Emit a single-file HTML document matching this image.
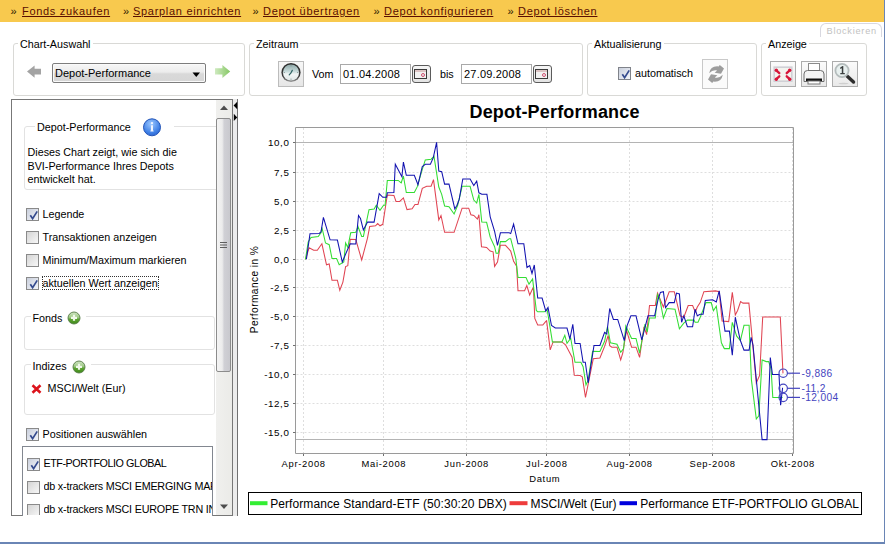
<!DOCTYPE html>
<html><head><meta charset="utf-8">
<style>
*,*::before,*::after{box-sizing:border-box}
html,body{margin:0;padding:0;width:885px;height:548px;overflow:hidden;background:#fff;font-family:"Liberation Sans",sans-serif;}
.a{position:absolute}
#top{left:0;top:0;width:884px;height:22px;background:#f8c94e}
.lk{position:absolute;top:5px;font-size:11px;letter-spacing:0.7px;color:#5a0e00;text-decoration:underline;white-space:pre;line-height:13px}
.rq{position:absolute;top:4.5px;font-size:11px;font-weight:normal;color:#2e2000;line-height:13px}
.gb{position:absolute;border:1px solid #d9d9d6;border-radius:3px}
.gt{position:absolute;background:#fff;font-size:10.75px;color:#000;white-space:pre;line-height:12px;padding:0 2px}
.t{position:absolute;font-size:10.75px;color:#000;white-space:pre;line-height:12px}
.cb{position:absolute;width:13px;height:13px;border:1px solid #80838a;background:linear-gradient(135deg,#c9cfdc,#f3f5fa)}
.cbg{border-color:#8a8a8a}
.ck{position:absolute;left:1px;top:1px}
.btn{position:absolute;border:1px solid #b5b5b5;background:linear-gradient(#f6f6f6,#e2e2e2)}
.cal{width:19px;height:18px;border:1px solid #5b5b5b;border-radius:3px;background:linear-gradient(#f6f6f6,#e3e3e3)}
.cal::before{content:"";position:absolute;left:1px;top:3px;width:13px;height:10px;border:1.5px solid #3a3a3a;background:linear-gradient(#dcc4c4 0,#dcc4c4 2px,#f2f2f2 2px)}
.cal::after{content:"";position:absolute;left:7.7px;top:6.8px;width:4px;height:4px;border:1px solid #d05070;border-radius:50%}
.ib{width:26px;height:26px;border:1px solid #acacac;background:linear-gradient(#fbfbfb,#e9e9e9)}
</style></head><body>
<div id="top" class="a"></div>
<div class="rq" style="left:10.5px">&raquo;</div><div class="lk" style="left:22px">Fonds zukaufen</div>
<div class="rq" style="left:123px">&raquo;</div><div class="lk" style="left:133px">Sparplan einrichten</div>
<div class="rq" style="left:252.5px">&raquo;</div><div class="lk" style="left:263px">Depot übertragen</div>
<div class="rq" style="left:373.5px">&raquo;</div><div class="lk" style="left:384px">Depot konfigurieren</div>
<div class="rq" style="left:507.5px">&raquo;</div><div class="lk" style="left:518px">Depot löschen</div>
<div class="a" style="left:884px;top:0;width:1px;height:544px;background:#6a85b5"></div>
<div class="a" style="left:0;top:542px;width:885px;height:2px;background:#6a85b5"></div>

<!-- Blockieren tab -->
<div class="a" style="left:820px;top:23px;width:62px;height:14px;border:1px solid #d8d8e0;border-bottom:none;border-radius:6px 6px 0 0"></div>
<div class="t" style="left:826.5px;top:25px;color:#c2c2c2;font-size:9.2px;letter-spacing:0.75px">Blockieren</div>

<!-- group boxes -->
<div class="gb" style="left:13px;top:43px;width:232px;height:53px"></div>
<div class="gt" style="left:18px;top:38px">Chart-Auswahl</div>
<div class="gb" style="left:249px;top:43px;width:334px;height:53px"></div>
<div class="gt" style="left:254px;top:38px">Zeitraum</div>
<div class="gb" style="left:587px;top:43px;width:170px;height:53px"></div>
<div class="gt" style="left:592px;top:38px">Aktualisierung</div>
<div class="gb" style="left:761px;top:43px;width:106px;height:53px"></div>
<div class="gt" style="left:766px;top:38px">Anzeige</div>


<!-- Chart-Auswahl widgets -->
<svg class="a" style="left:26px;top:65px" width="16" height="14" viewBox="0 0 16 14"><path d="M1 6.6 L8.6 0.5 L8.6 3.8 L15 3.8 L15 9.6 L8.6 9.6 L8.6 12.7 Z" fill="#a3a3a3"/></svg>
<div class="a" style="left:52px;top:63px;width:154px;height:20px;border:1px solid #7d7d7d;border-radius:2px;background:linear-gradient(#f7f7f7 0%,#ececec 45%,#d9d9d9 55%,#d6d6d6 100%);box-shadow:inset 0 0 0 1px #fafafa"></div>
<div class="t" style="left:55px;top:67px;font-size:11px">Depot-Performance</div>
<svg class="a" style="left:192px;top:72px" width="9" height="6"><path d="M0.5 0.5 L8 0.5 L4.25 5 Z" fill="#000"/></svg>
<svg class="a" style="left:214px;top:64px" width="18" height="16" viewBox="0 0 18 16"><defs><linearGradient id="ga" x1="0" x2="1"><stop offset="0" stop-color="#cfeac0"/><stop offset="1" stop-color="#86c865"/></linearGradient></defs><path d="M1 4.2 L8.4 4.2 L8.4 1 L16.2 7.6 L8.4 14 L8.4 10.6 L1 10.6 Z" fill="url(#ga)"/></svg>

<!-- Zeitraum widgets -->
<div class="a" style="left:278px;top:61px;width:26px;height:26px;border:1px solid #bcbcbc;background:linear-gradient(#f7f7f7,#e6e6e6)"></div>
<svg class="a" style="left:279px;top:61px" width="24" height="24" viewBox="0 0 24 24"><defs><linearGradient id="cf" x1="0" y1="0" x2="0" y2="1"><stop offset="0" stop-color="#8fa9a9"/><stop offset="0.45" stop-color="#c9dcdc"/><stop offset="0.6" stop-color="#f2f6f6"/><stop offset="1" stop-color="#dfe6e6"/></linearGradient><linearGradient id="cr" x1="0" y1="0" x2="0" y2="1"><stop offset="0" stop-color="#2a2a2a"/><stop offset="0.7" stop-color="#3a3a3a"/><stop offset="1" stop-color="#9a9a9a"/></linearGradient></defs><circle cx="12" cy="11.5" r="9.6" fill="url(#cr)"/><circle cx="12" cy="11.5" r="8.1" fill="url(#cf)"/><g stroke="#7a8c8c" stroke-width="0.8"><path d="M12 4.2 V5.4 M12 17.6 V18.8 M4.7 11.5 H5.9 M18.1 11.5 H19.3"/></g><path d="M12 11.8 L13.3 9.4 M12 11.8 L10.2 13.8" stroke="#2f6464" stroke-width="1.2" stroke-linecap="round"/></svg>
<div class="t" style="left:312px;top:68px;font-size:10.75px">Vom</div>
<div class="a" style="left:340px;top:64px;width:71px;height:20px;border:1px solid #a9a9a9;background:#fff"></div>
<div class="t" style="left:343px;top:68px;font-size:11px;letter-spacing:0.2px">01.04.2008</div>
<div class="a cal" style="left:412px;top:65px"></div>
<div class="t" style="left:440px;top:68px;font-size:10.75px">bis</div>
<div class="a" style="left:461px;top:64px;width:71px;height:20px;border:1px solid #a9a9a9;background:#fff"></div>
<div class="t" style="left:464px;top:68px;font-size:11px;letter-spacing:0.2px">27.09.2008</div>
<div class="a cal" style="left:533px;top:65px"></div>

<!-- Aktualisierung -->
<div class="cb" style="left:618px;top:67px"><svg class="ck" width="11" height="11" viewBox="0 0 11 11"><path d="M2.3 5.3 L4.6 8.6 L9.2 1.4" stroke="#354b8e" stroke-width="1.7" fill="none"/></svg></div>
<div class="t" style="left:635px;top:67px;font-size:10.75px">automatisch</div>
<div class="a" style="left:702px;top:59px;width:26px;height:30px;border:1px solid #c9c9c9;background:#fbfbfb"></div>
<svg class="a" style="left:702px;top:59px" width="26" height="30" viewBox="0 0 26 30"><g fill="#9d9d9d"><path d="M7.2 14.2 Q 8.4 6.6 16.6 7.4 L 17.8 5.9 L 22 9.4 L 19 14.8 L 12.6 13.8 L 15.2 11.6 Q 10.8 10.4 7.2 14.2 Z"/><path d="M20.8 15.8 Q 19.6 23.4 11.4 22.6 L 10.2 24.1 L 6 20.6 L 9 15.2 L 15.4 16.2 L 12.8 18.4 Q 17.2 19.6 20.8 15.8 Z"/></g></svg>

<!-- Anzeige -->
<div class="a ib" style="left:770px;top:61px"></div>
<div class="a ib" style="left:801px;top:61px"></div>
<div class="a ib" style="left:832px;top:61px"></div>
<svg class="a" style="left:770px;top:61px" width="26" height="26" viewBox="0 0 26 26"><rect x="4.2" y="6.2" width="17.6" height="14" fill="#f3f3ee" stroke="#d0d0d6" stroke-width="1.6"/><g stroke="#d8173a" stroke-width="2.3" stroke-linecap="round" fill="none"><path d="M6.3 9.3 L9.3 12.2"/><path d="M19.7 9.3 L16.7 12.2"/><path d="M6.3 18.2 L9.3 15.3"/><path d="M19.7 18.2 L16.7 15.3"/></g><g fill="#d8173a"><circle cx="6.3" cy="9.3" r="1.7"/><circle cx="19.7" cy="9.3" r="1.7"/><circle cx="6.3" cy="18.2" r="1.7"/><circle cx="19.7" cy="18.2" r="1.7"/></g></svg>
<svg class="a" style="left:802px;top:62px" width="24" height="24" viewBox="0 0 24 24"><rect x="6.5" y="1.5" width="11" height="8" fill="#fff" stroke="#8a8a8a"/><path d="M2 12 Q2 8.5 5.5 8.5 L18.5 8.5 Q22 8.5 22 12 L22 19.5 L2 19.5 Z" fill="#f3f3f3" stroke="#6e6e6e"/><rect x="4" y="16.5" width="16" height="2.5" fill="#111"/><rect x="6" y="19" width="12" height="3" fill="#fff" stroke="#777"/></svg>
<svg class="a" style="left:832px;top:61px" width="26" height="26" viewBox="0 0 26 26"><ellipse cx="11.5" cy="22.5" rx="5" ry="0.7" fill="#cfcfcf"/><line x1="14.5" y1="14.5" x2="21.5" y2="21" stroke="#2e2e2e" stroke-width="3.4" stroke-linecap="round"/><circle cx="10" cy="9.5" r="6.6" fill="#e8f0ef" stroke="#b4bcbc" stroke-width="1.8"/><path d="M8.2 6.6 L10.6 5 L11.3 5 L11.3 12 L12.8 12 L12.8 13.2 L8.3 13.2 L8.3 12 L9.8 12 L9.8 7.3 L8.2 8 Z" fill="#3a3f3f"/></svg>

<!-- Left panel -->
<div class="a" style="left:11px;top:99px;width:222px;height:417px;border:1px solid #777;background:#fff;overflow:hidden">
</div>
<div class="gb" style="left:24px;top:126px;width:200px;height:64px;border-radius:3px;border-color:#e2e2e2"></div>
<div class="gt" style="left:35px;top:121px;width:139px">Depot-Performance</div>
<svg class="a" style="left:141px;top:117px" width="22" height="22" viewBox="0 0 22 22"><defs><radialGradient id="ig" cx="0.45" cy="0.3" r="0.75"><stop offset="0" stop-color="#9cc8ff"/><stop offset="0.7" stop-color="#3f80e6"/><stop offset="1" stop-color="#2c62cc"/></radialGradient></defs><circle cx="11" cy="10.3" r="9.6" fill="#fff"/><circle cx="11" cy="10.3" r="8.5" fill="url(#ig)" stroke="#2556b8" stroke-width="1"/><circle cx="11" cy="6.1" r="1.2" fill="#eef4ff"/><path d="M9.9 8.3 H12 V13.6 H12.6 V14.6 H9.4 V13.6 H9.9 Z" fill="#eef4ff"/></svg>
<div class="t" style="left:27.5px;top:146px;line-height:13.7px">Dieses Chart zeigt, wie sich die
BVI-Performance Ihres Depots
entwickelt hat.</div>

<div class="cb cbg" style="left:26px;top:208px;background:linear-gradient(135deg,#c9cfdc,#f3f5fa)"><svg class="ck" width="11" height="11" viewBox="0 0 11 11"><path d="M2.3 5.3 L4.6 8.6 L9.2 1.4" stroke="#354b8e" stroke-width="1.7" fill="none"/></svg></div>
<div class="t" style="left:42.5px;top:208px">Legende</div>
<div class="cb cbg" style="left:26px;top:231px;background:linear-gradient(135deg,#d5d5d5,#f7f7f7)"></div>
<div class="t" style="left:42.5px;top:231px">Transaktionen anzeigen</div>
<div class="cb cbg" style="left:26px;top:254px;background:linear-gradient(135deg,#d5d5d5,#f7f7f7)"></div>
<div class="t" style="left:42.5px;top:254px">Minimum/Maximum markieren</div>
<div class="cb cbg" style="left:26px;top:277px;background:linear-gradient(135deg,#c9cfdc,#f3f5fa)"><svg class="ck" width="11" height="11" viewBox="0 0 11 11"><path d="M2.3 5.3 L4.6 8.6 L9.2 1.4" stroke="#354b8e" stroke-width="1.7" fill="none"/></svg></div>
<div class="t" style="left:42.5px;top:277px">aktuellen Wert anzeigen</div>
<div class="a" style="left:42px;top:276px;width:117px;height:14px;border:1px dotted #333"></div>

<div class="gb" style="left:24px;top:316px;width:191px;height:34px;border-radius:3px;border-color:#e2e2e2"></div>
<div class="gt" style="left:30.5px;top:312px;width:55px">Fonds</div>
<svg class="a plus" style="left:66.5px;top:311px" width="14" height="14" viewBox="0 0 14 14"><defs><linearGradient id="pg" x1="0" y1="0" x2="0" y2="1"><stop offset="0" stop-color="#d2e6c6"/><stop offset="0.45" stop-color="#9cc882"/><stop offset="0.6" stop-color="#5ca332"/><stop offset="1" stop-color="#3f8a18"/></linearGradient></defs><circle cx="7" cy="7" r="6" fill="url(#pg)" stroke="#557a45" stroke-width="0.9"/><path d="M7 3.8 V9.8 M4 6.8 H10" stroke="#f0f8ea" stroke-width="2.2"/></svg>
<div class="gb" style="left:24px;top:364px;width:191px;height:51px;border-radius:3px;border-color:#e2e2e2"></div>
<div class="gt" style="left:30.5px;top:360px;width:60px">Indizes</div>
<svg class="a plus" style="left:71.5px;top:359.5px" width="14" height="14" viewBox="0 0 14 14"><circle cx="7" cy="7" r="6" fill="url(#pg)" stroke="#557a45" stroke-width="0.9"/><path d="M7 3.8 V9.8 M4 6.8 H10" stroke="#f0f8ea" stroke-width="2.2"/></svg>
<svg class="a" style="left:31px;top:384px" width="11" height="10" viewBox="0 0 11 10"><path d="M1.5 1.3 L9.5 8.7 M9.5 1.3 L1.5 8.7" stroke="#dc141c" stroke-width="2.6"/></svg>
<div class="t" style="left:47.5px;top:382px">MSCI/Welt (Eur)</div>

<div class="cb cbg" style="left:26px;top:428px;background:linear-gradient(135deg,#c9cfdc,#f3f5fa)"><svg class="ck" width="11" height="11" viewBox="0 0 11 11"><path d="M2.3 5.3 L4.6 8.6 L9.2 1.4" stroke="#354b8e" stroke-width="1.7" fill="none"/></svg></div>
<div class="t" style="left:42.5px;top:428px">Positionen auswählen</div>
<div class="a" style="left:22px;top:446px;width:191px;height:70px;border:1px solid #828790;border-bottom:none;background:#fff;overflow:hidden"></div>
<div class="a" style="left:12px;top:446px;width:200px;height:69px;overflow:hidden">
 <div class="cb cbg" style="left:15px;top:12px;background:linear-gradient(135deg,#c9cfdc,#f3f5fa)"><svg class="ck" width="11" height="11" viewBox="0 0 11 11"><path d="M2.3 5.3 L4.6 8.6 L9.2 1.4" stroke="#354b8e" stroke-width="1.7" fill="none"/></svg></div>
 <div class="t" style="left:31.5px;top:11px;letter-spacing:-0.45px">ETF-PORTFOLIO GLOBAL</div>
 <div class="cb cbg" style="left:15px;top:34.5px;background:linear-gradient(135deg,#d5d5d5,#f7f7f7)"></div>
 <div class="t" style="left:31.5px;top:34px;width:180px;overflow:hidden;letter-spacing:-0.2px">db x-trackers MSCI EMERGING MARKETS</div>
 <div class="cb cbg" style="left:15px;top:57.5px;background:linear-gradient(135deg,#d5d5d5,#f7f7f7)"></div>
 <div class="t" style="left:31.5px;top:57px;width:180px;overflow:hidden;letter-spacing:-0.2px">db x-trackers MSCI EUROPE TRN INDEX</div>
</div>

<!-- scrollbar -->
<div class="a" style="left:216px;top:100px;width:16px;height:415px;background:linear-gradient(90deg,#f0f0ee,#ebebe8)"></div>
<svg class="a" style="left:219px;top:104px" width="10" height="8"><path d="M1 6 L5 1.5 L9 6 Z" fill="#4d4d4d"/></svg>
<div class="a" style="left:216px;top:118px;width:15px;height:254px;border:1px solid #8c8c8c;border-radius:2px;background:linear-gradient(90deg,#f4f4f4 0%,#ececec 40%,#d0d0d5 55%,#c9c9ce 100%)"></div>
<div class="a" style="left:220px;top:242px;width:7px;height:1px;background:#5e5e5e;box-shadow:0 2.5px 0 #5e5e5e,0 5px 0 #5e5e5e"></div>
<svg class="a" style="left:219px;top:503px" width="10" height="8"><path d="M1 1.5 L5 6 L9 1.5 Z" fill="#4d4d4d"/></svg>

<!-- splitter -->
<div class="a" style="left:233px;top:99px;width:4px;height:417px;background:#ececec"></div><div class="a" style="left:237px;top:99px;width:1px;height:417px;background:#717171"></div>
<svg class="a" style="left:233px;top:101px" width="5" height="20"><path d="M4.2 0.8 L0.6 4.5 L4.2 8.2 Z" fill="#000"/><path d="M0.8 12.8 L4.2 16.5 L0.8 20 Z" fill="#000"/></svg>
<!--CHART--><svg class="a" style="left:0;top:0" width="885" height="548" viewBox="0 0 885 548">
<g stroke="#dedede" stroke-width="1" stroke-dasharray="2,2" fill="none">
<line x1="296.5" y1="142.5" x2="793" y2="142.5"/>
<line x1="296.5" y1="172.5" x2="793" y2="172.5"/>
<line x1="296.5" y1="201.5" x2="793" y2="201.5"/>
<line x1="296.5" y1="230.5" x2="793" y2="230.5"/>
<line x1="296.5" y1="259.5" x2="793" y2="259.5"/>
<line x1="296.5" y1="287.5" x2="793" y2="287.5"/>
<line x1="296.5" y1="316.5" x2="793" y2="316.5"/>
<line x1="296.5" y1="345.5" x2="793" y2="345.5"/>
<line x1="296.5" y1="374.5" x2="793" y2="374.5"/>
<line x1="296.5" y1="403.5" x2="793" y2="403.5"/>
<line x1="296.5" y1="432.5" x2="793" y2="432.5"/>
<line x1="303.5" y1="128" x2="303.5" y2="453"/>
<line x1="383.5" y1="128" x2="383.5" y2="453"/>
<line x1="466.5" y1="128" x2="466.5" y2="453"/>
<line x1="546.5" y1="128" x2="546.5" y2="453"/>
<line x1="629.5" y1="128" x2="629.5" y2="453"/>
<line x1="712.5" y1="128" x2="712.5" y2="453"/>
<line x1="792.5" y1="128" x2="792.5" y2="453"/>
</g>
<g stroke="#b4b4b4" stroke-width="1"><line x1="296" y1="142.5" x2="793" y2="142.5"/><line x1="296" y1="439.5" x2="793" y2="439.5"/></g>
<path d="M295.5 127.5 H793.5 V453.5 H295.5 Z" fill="none" stroke="#9a9a9a" stroke-width="1"/>
<g stroke="#707070" stroke-width="1">
<line x1="293" y1="142.5" x2="295.5" y2="142.5"/>
<line x1="293" y1="172.5" x2="295.5" y2="172.5"/>
<line x1="293" y1="201.5" x2="295.5" y2="201.5"/>
<line x1="293" y1="230.5" x2="295.5" y2="230.5"/>
<line x1="293" y1="259.5" x2="295.5" y2="259.5"/>
<line x1="293" y1="287.5" x2="295.5" y2="287.5"/>
<line x1="293" y1="316.5" x2="295.5" y2="316.5"/>
<line x1="293" y1="345.5" x2="295.5" y2="345.5"/>
<line x1="293" y1="374.5" x2="295.5" y2="374.5"/>
<line x1="293" y1="403.5" x2="295.5" y2="403.5"/>
<line x1="293" y1="432.5" x2="295.5" y2="432.5"/>
<line x1="303.5" y1="454" x2="303.5" y2="456"/>
<line x1="383.5" y1="454" x2="383.5" y2="456"/>
<line x1="466.5" y1="454" x2="466.5" y2="456"/>
<line x1="546.5" y1="454" x2="546.5" y2="456"/>
<line x1="629.5" y1="454" x2="629.5" y2="456"/>
<line x1="712.5" y1="454" x2="712.5" y2="456"/>
<line x1="792.5" y1="454" x2="792.5" y2="456"/>
</g>
<g font-family="Liberation Sans" font-size="9.4" fill="#000" letter-spacing="0.7">
<text x="289.4" y="146.0" text-anchor="end" font-size="9.8" letter-spacing="0.55">10,0</text>
<text x="289.4" y="176.0" text-anchor="end" font-size="9.8" letter-spacing="0.55">7,5</text>
<text x="289.4" y="205.0" text-anchor="end" font-size="9.8" letter-spacing="0.55">5,0</text>
<text x="289.4" y="234.0" text-anchor="end" font-size="9.8" letter-spacing="0.55">2,5</text>
<text x="289.4" y="263.0" text-anchor="end" font-size="9.8" letter-spacing="0.55">0,0</text>
<text x="289.4" y="291.0" text-anchor="end" font-size="9.8" letter-spacing="0.55">-2,5</text>
<text x="289.4" y="320.0" text-anchor="end" font-size="9.8" letter-spacing="0.55">-5,0</text>
<text x="289.4" y="349.0" text-anchor="end" font-size="9.8" letter-spacing="0.55">-7,5</text>
<text x="289.4" y="378.0" text-anchor="end" font-size="9.8" letter-spacing="0.55">-10,0</text>
<text x="289.4" y="407.0" text-anchor="end" font-size="9.8" letter-spacing="0.55">-12,5</text>
<text x="289.4" y="436.0" text-anchor="end" font-size="9.8" letter-spacing="0.55">-15,0</text>
<text x="303.7" y="467" text-anchor="middle">Apr-2008</text>
<text x="383.9" y="467" text-anchor="middle">Mai-2008</text>
<text x="466.7" y="467" text-anchor="middle">Jun-2008</text>
<text x="546.9" y="467" text-anchor="middle">Jul-2008</text>
<text x="629.6" y="467" text-anchor="middle">Aug-2008</text>
<text x="712.6" y="467" text-anchor="middle">Sep-2008</text>
<text x="792.9" y="467" text-anchor="middle">Okt-2008</text>
<text x="544.8" y="481.8" text-anchor="middle">Datum</text>
<text transform="translate(258.3,289.7) rotate(-90)" text-anchor="middle" font-size="10.2" letter-spacing="0" textLength="87" lengthAdjust="spacing">Performance in %</text>
</g>
<text x="469.5" y="117.5" font-family="Liberation Sans" font-weight="bold" font-size="18" textLength="170" lengthAdjust="spacing">Depot-Performance</text>
<g fill="none" stroke-width="1.05" stroke-linejoin="miter">
<polyline points="305.5,259.3 309.1,247.8 313.7,250.2 317.3,250.2 321.9,243.8 326.5,264.8 329.2,263.9 332,280.3 337.4,280.3 339.8,290.3 342.9,282.1 345.6,266.6 347.8,265.7 350.2,239.2 355.8,239.6 361.7,260 367.5,238.2 369.7,226.5 375.5,225.8 377.7,223.6 380,225.8 382.8,224.3 387.3,195 393.9,195.4 396,201.5 399.7,201.5 403.4,197.9 407,209.6 412.1,208.8 415,204.5 418,204.5 422.3,188.4 426.7,186.2 431.1,186.2 433.5,179.6 438.8,219.9 441,215.5 444.6,232.3 454.1,232.3 462.1,208.2 468.7,208.2 470.9,214.7 473.8,215.5 477.4,219.1 478.9,214.7 481.5,246.7 486.6,247.4 490.2,251.1 493.1,251.8 494.6,266.4 497.5,262 500.4,245.3 505.5,245.3 510.7,251.1 513.6,261.3 516.6,266.2 518,290.7 524.6,290.7 526.8,285.5 529.7,295 533.4,287 534.8,318.4 537.7,325 542.8,325 545.8,321.3 546.6,320.7 550.2,349.9 553.1,341.9 561.9,341.9 565.5,344.8 572.1,357.2 574.3,375.2 580.1,375.5 582.3,376.9 585.5,397.4 593.3,358.7 599.9,358 604.6,346.4 608.2,335.5 609.7,345.7 611.9,347.2 617,347.2 620.7,360 622.8,353 626.5,330.4 631.6,347.2 636,347.2 639.6,357.4 644,326.7 646.6,334.7 649.5,305.5 655.3,305.5 657.5,293.1 663.4,307 669.2,291.7 674.3,291.7 680.1,315.8 683.8,317.2 688.2,305.5 692.6,305.5 695.3,312 697.3,307 700.2,302.6 703.9,291.7 715.5,290.9 719.2,291.7 722.1,320.9 728.7,321.6 732.3,292.4 735.3,315 737.6,310.5 740.6,301.5 743,303.1 748.9,303.1 756.3,382.9 759.6,375.5 762.7,317 780.3,317 783,373.4" stroke="#e04452"/>
<polyline points="305.5,259.3 308.2,242 311,237.4 318.2,236.5 321,232.8 321.9,227.4 325.5,243 329.2,244.7 332,258.4 336.5,258.4 339.2,264.8 343.8,262 345.6,242.9 347.8,247.4 350.7,232.8 355.8,232.3 358,226.5 361.7,236.4 363.4,236.4 369,209.7 374.1,209 376.3,205.3 380,210.4 383.6,205.3 385.1,205.2 387.3,180.4 398.2,180.4 401.2,182.8 403.4,176 406.3,192.5 414.3,192.5 417.2,186.9 422.3,169.4 425.3,159.9 431.1,159.2 434,156.3 438.8,187 441.7,194.3 444.6,206 449,206.7 454.1,214 457.7,205.3 462.1,186.3 470.1,186.3 473.8,200.1 476.7,203 478.9,194.3 481.8,222 486.6,222.3 490.2,237.2 494.6,246.7 496.1,253.3 498.2,253.3 500.4,241.6 505.5,241.6 509.2,238.7 510.7,238.7 515.8,258.4 518,277.5 526,277.5 529,284.1 532.6,279 536.3,310.4 537.7,311.8 544.3,311.8 547.2,309.6 552.4,341.9 561.9,341.9 564.8,335.3 567,343.4 570.7,338.2 575,362.3 580.9,362.3 583.1,366.7 586,385 588.2,379.9 592.6,351.4 599.9,351.5 604.6,341.3 607.5,326.7 610.4,342.8 617,344.2 620.7,352.3 623.6,348.6 625.8,326 631.6,338.4 636,338.4 639.6,353 645,324 647.2,332 649.5,318 655.3,318 657.5,294.6 659.7,299 663.4,318 667,308.5 675,309.2 679.4,328.9 683.8,323.1 687.4,320.1 694,320.1 695.1,322.3 698,322.3 700.2,317.2 706,302.6 711.2,302.6 713.4,310.7 716.3,306.3 721.4,342.8 724.3,348.6 729.4,348.6 732.3,322.3 736.7,336.2 740.4,340.6 744,325.3 749.1,325.3 751.4,379.6 756.3,419 758.8,415.8 762.1,359.9 766.2,361.6 768.7,361.6 771.1,369 772.8,397.4 782.6,397.4" stroke="#33dd33"/>
<polyline points="306.4,259.3 310,233.8 319.2,233.4 321,232 323.4,217.3 330.1,239.8 337.4,240.1 342.3,262 346.5,252 350.2,243.8 355.8,244 358.5,215.5 360.5,218.5 363.4,230.1 367.5,222.1 374.1,222.1 379.2,193.6 382.8,197.3 386.6,197.2 387.3,192.8 393.9,192.5 395.3,164.3 401.9,176.7 403.4,162.1 406.3,175.3 414.3,175.3 418,184.7 422.3,166.5 425.3,164.3 430.4,164.3 433.3,157.7 436.6,142.4 438.8,171 441.7,171.7 444.6,184.1 449,184.1 454.8,208.9 457,205.3 459.2,199.4 462.8,179 470.1,179 473.8,185.5 476.7,181.2 478.9,192.8 481.8,194.3 486.9,194.3 490.2,216.8 494.6,231.4 497.5,245.3 500.4,232.8 509.2,232.8 510.7,233.6 513.6,224.1 518,243.8 523.8,243.8 527,267.5 529.7,265.5 532,273.5 534.3,265 537.7,298 542.1,298 545.8,311.1 548,307.4 551.5,325.5 555.3,328 567,328 569.9,339 572.8,324.4 575,343.4 580.1,343.4 583.1,362.3 585.3,362.3 588.2,382.8 594,345.5 599.9,345.5 604.6,332.3 606.8,334 609.7,308.5 613.4,319.4 617.7,319.4 624.3,340.6 627.2,325.3 630.9,315.8 636,315.8 641.8,339.9 648,315.8 654.6,315.8 658.2,299 660.4,292.4 663.4,291.7 665.5,307.7 669.2,302.6 674.3,302.6 676.5,293.1 679.4,293.9 681.6,322.3 683.8,315.8 687.4,326.7 692.6,326.7 695.1,309.2 697.3,315.8 700.2,314.3 703.1,314.3 705.3,300.4 712.6,299.7 716.3,301.9 719.2,290.9 725,331.1 729.4,331.1 732.3,355.2 735.3,317.2 740.2,340 744,350.1 749.1,350.1 751.1,337.4 753,345 762.1,439.6 767,439.6 770.3,357.5 772.4,374.4 779,374.4 780.6,405.1 782.6,387.8" stroke="#1212b0"/>
</g>
<g stroke="#4545c0" stroke-width="1.2" fill="none">
<circle cx="783.2" cy="373.2" r="4.2"/><line x1="787.4" y1="373.2" x2="800" y2="373.2"/>
<circle cx="783.2" cy="388.3" r="4.2"/><line x1="787.4" y1="388.3" x2="800" y2="388.3"/>
<circle cx="783.2" cy="397.4" r="4.2"/><line x1="787.4" y1="397.4" x2="800" y2="397.4"/>
</g>
<g font-family="Liberation Sans" font-size="10.2" letter-spacing="0.35" fill="#4545c0">
<text x="801.5" y="376.6">-9,886</text>
<text x="801.5" y="391.7">-11,2</text>
<text x="801.5" y="400.6">-12,004</text>
</g>
<rect x="248.5" y="492.5" width="613" height="22" fill="#fff" stroke="#000" stroke-width="1"/>
<g stroke-width="4"><line x1="250" y1="503.2" x2="267.5" y2="503.2" stroke="#33ee33"/><line x1="509.5" y1="503.2" x2="527.5" y2="503.2" stroke="#ee3c3c"/><line x1="619.5" y1="503.2" x2="637" y2="503.2" stroke="#0000dd"/></g>
<g font-family="Liberation Sans" font-size="12" fill="#000"><text x="270.2" y="508" textLength="236.6" lengthAdjust="spacing">Performance Standard-ETF (50:30:20 DBX)</text><text x="530.6" y="508" textLength="85.8" lengthAdjust="spacing">MSCI/Welt (Eur)</text><text x="640.3" y="508" textLength="218.6" lengthAdjust="spacing">Performance ETF-PORTFOLIO GLOBAL</text></g>
</svg><!--/CHART-->
</body></html>
